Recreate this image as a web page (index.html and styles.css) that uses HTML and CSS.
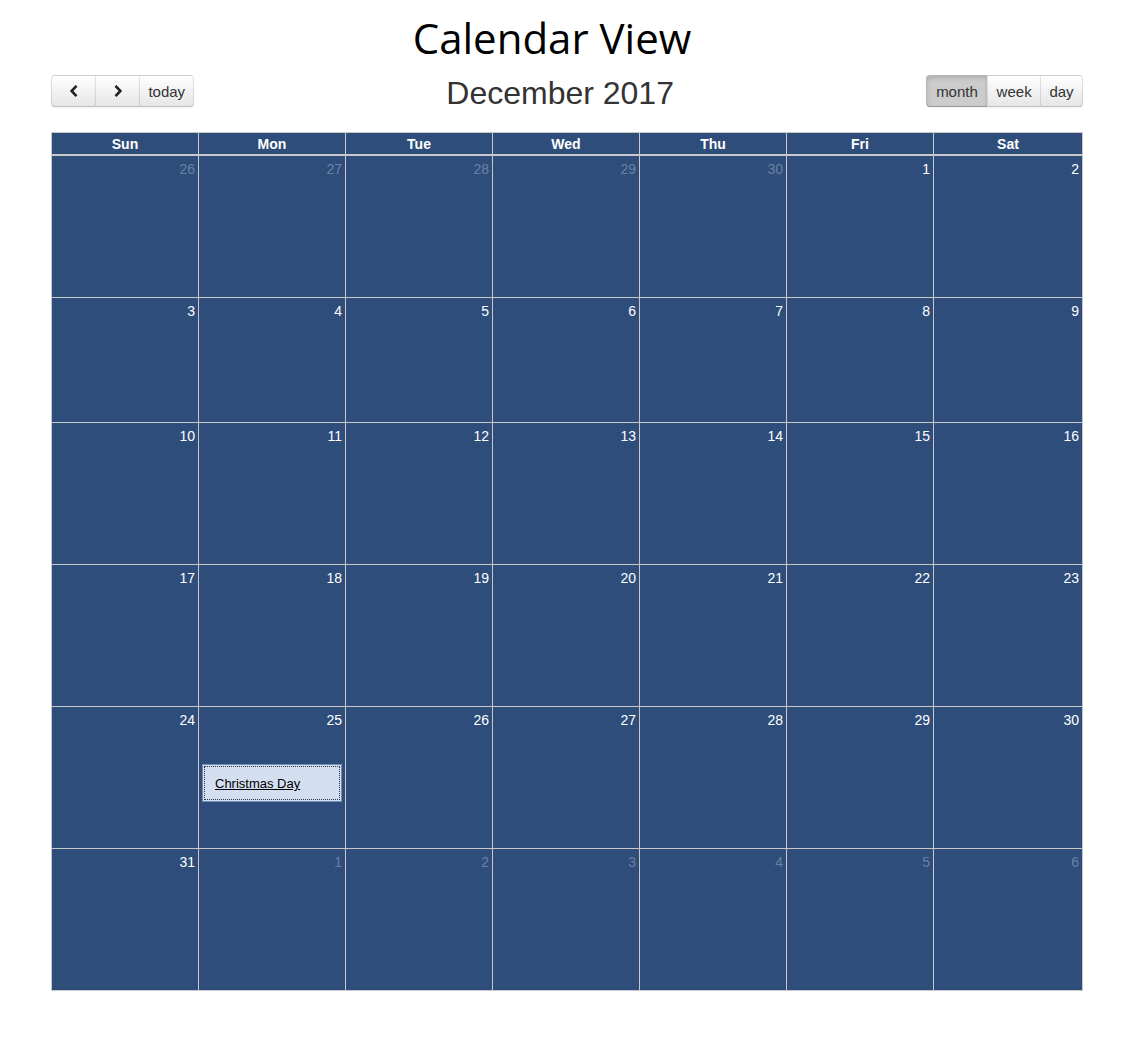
FILE: index.html
```html
<!DOCTYPE html>
<html>
<head>
<meta charset="utf-8">
<title>Calendar View</title>
<link rel="stylesheet" href="styles.css">
</head>
<body>
<h1 class="page-title">Calendar View</h1>
<div class="calendar">
  <div class="toolbar">
    <div class="btn-group">
      <button class="btn btn-first btn-icon" aria-label="prev"><svg width="12" height="14" viewBox="0 0 12 14"><path d="M8.5 1.8 L3.6 7 L8.5 12.2" fill="none" stroke="#222" stroke-width="2.6" stroke-linejoin="miter"/></svg></button>
      <button class="btn btn-icon" aria-label="next"><svg width="12" height="14" viewBox="0 0 12 14"><path d="M3.5 1.8 L8.4 7 L3.5 12.2" fill="none" stroke="#222" stroke-width="2.6" stroke-linejoin="miter"/></svg></button>
      <button class="btn btn-last">today</button>
    </div>
    <h2 class="month-title">December 2017</h2>
    <div class="btn-group">
      <button class="btn btn-first btn-active btn-wide">month</button>
      <button class="btn">week</button>
      <button class="btn btn-last">day</button>
    </div>
  </div>
  <div class="grid">
    <div class="head">Sun</div><div class="head">Mon</div><div class="head">Tue</div><div class="head">Wed</div><div class="head">Thu</div><div class="head">Fri</div><div class="head">Sat</div>

    <div class="day other">26</div><div class="day other">27</div><div class="day other">28</div><div class="day other">29</div><div class="day other">30</div><div class="day">1</div><div class="day">2</div>
    <div class="day">3</div><div class="day">4</div><div class="day">5</div><div class="day">6</div><div class="day">7</div><div class="day">8</div><div class="day">9</div>
    <div class="day">10</div><div class="day">11</div><div class="day">12</div><div class="day">13</div><div class="day">14</div><div class="day">15</div><div class="day">16</div>
    <div class="day">17</div><div class="day">18</div><div class="day">19</div><div class="day">20</div><div class="day">21</div><div class="day">22</div><div class="day">23</div>
    <div class="day">24</div>
    <div class="day"><span class="num">25</span><div class="event"><a href="#">Christmas Day</a></div></div>
    <div class="day">26</div><div class="day">27</div><div class="day">28</div><div class="day">29</div><div class="day">30</div>
    <div class="day">31</div><div class="day other">1</div><div class="day other">2</div><div class="day other">3</div><div class="day other">4</div><div class="day other">5</div><div class="day other">6</div>
  </div>
</div>
</body>
</html>
```
FILE: styles.css
```css
html, body {
  margin: 0;
  padding: 0;
  background: #fff;
}
body {
  font-family: "Liberation Sans", Arial, sans-serif;
  font-size: 14px;
  color: #333;
}
.page-title {
  margin: 0;
  padding: 12px 32px 0 0;
  height: 55px;
  box-sizing: border-box;
  text-align: center;
  font-family: "Open Sans", sans-serif;
  font-weight: 400;
  font-size: 42px;
  line-height: 52px;
  color: #000;
}
.calendar {
  margin: 0 0 0 51px;
  width: 1032px;
}
.toolbar {
  display: flex;
  justify-content: space-between;
  align-items: flex-start;
  height: 77px;
  padding-top: 20px;
  box-sizing: border-box;
}
.btn-group {
  display: flex;
}
.btn {
  height: 32px;
  margin: 0;
  padding: 0 8.4px;
  font-family: "Liberation Sans", Arial, sans-serif;
  font-size: 15px;
  color: #333;
  background: linear-gradient(#ffffff, #e6e6e6);
  border: 1px solid;
  border-color: rgba(0,0,0,0.1) rgba(0,0,0,0.1) rgba(0,0,0,0.25);
  box-shadow: inset 0 1px 0 rgba(255,255,255,0.2), 0 1px 2px rgba(0,0,0,0.05);
  margin-left: -1px;
  display: flex;
  align-items: center;
  justify-content: center;
}
.btn svg { display: block; }
.btn-icon { width: 45px; }
.btn-wide { padding: 0 9.4px; }
.btn-first { border-radius: 4px 0 0 4px; margin-left: 0; }
.btn-last { border-radius: 0 4px 4px 0; }
.btn-active {
  background: #cccccc;
  box-shadow: inset 0 2px 4px rgba(0,0,0,0.15), 0 1px 2px rgba(0,0,0,0.05);
}
.month-title {
  margin: 0;
  font-weight: 400;
  font-size: 32px;
  line-height: 36px;
  color: #333;
}
.grid {
  display: grid;
  grid-template-columns: repeat(6, 146px) 148px;
  grid-template-rows: 22px 141px 124px 141px 141px 141px 141px;
  gap: 1px;
  padding: 1px;
  background: #c8c8c8;
}
.head {
  background: #2e4d7b;
  color: #fff;
  font-weight: bold;
  text-align: center;
  line-height: 21px;
  padding-top: 1px;
  box-sizing: border-box;
  border-bottom: 1px solid #c8c8c8;
}
.day {
  background: #2e4d7b;
  color: #fff;
  text-align: right;
  padding: 5px 3px 0 0;
  line-height: 16px;
}
.day.other {
  color: rgba(255,255,255,0.3);
}
.num { display: block; }
.event {
  margin: 36px 0 0 3px;
  height: 38px;
  box-sizing: border-box;
  border: 1px solid #6f8fb5;
  background: #d3dff0;
  text-align: left;
  padding: 1px;
}
.event a {
  display: block;
  height: 100%;
  box-sizing: border-box;
  border: 1px dotted #333;
  padding: 10px 0 0 10px;
  font-size: 13px;
  line-height: 14px;
  color: #000;
  text-decoration: underline;
}
```
